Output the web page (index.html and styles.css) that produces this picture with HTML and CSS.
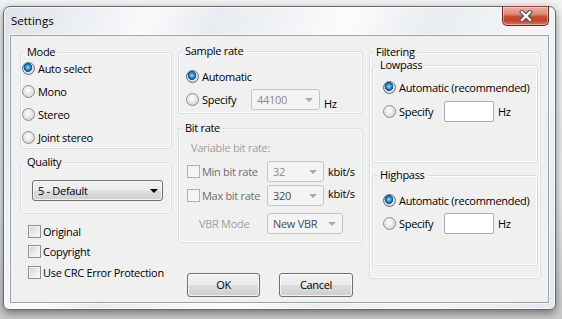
FILE: index.html
```html
<!DOCTYPE html>
<html lang="en">
<head>
    <meta charset="UTF-8">
    <title>Settings</title>
    <link rel="stylesheet" href="styles.css">
</head>
<body>
    <div class="window">
        <div class="titlebar">
            <span class="title">Settings</span>
            <div class="close">
                <svg width="14" height="12" viewBox="0 0 14 12">
                    <path d="M3 2 L11 10 M11 2 L3 10" stroke="#4a4f55" stroke-width="4.2" stroke-linecap="square" fill="none"/>
                    <path d="M3 2 L11 10 M11 2 L3 10" stroke="#ffffff" stroke-width="2.2" stroke-linecap="square" fill="none"/>
                </svg>
            </div>
        </div>

        <div class="client">
            <!-- left column -->
            <div class="col">
                <div class="group group-mode">
                    <div class="group-title">Mode</div>
                    <div class="mode-list">
                        <div class="row r23"><span class="radio checked"></span>Auto select</div>
                        <div class="row r23"><span class="radio"></span>Mono</div>
                        <div class="row r23"><span class="radio"></span>Stereo</div>
                        <div class="row r23"><span class="radio"></span>Joint stereo</div>
                    </div>
                </div>

                <div class="group group-quality">
                    <div class="group-title">Quality</div>
                    <div class="combo quality-combo">5 - Default<span class="arrow"></span></div>
                </div>

                <div class="check-list">
                    <div class="row r-check"><span class="box"></span>Original</div>
                    <div class="row r-check"><span class="box"></span>Copyright</div>
                    <div class="row r-check"><span class="box"></span>Use CRC Error Protection</div>
                </div>
            </div>

            <!-- middle column -->
            <div class="col">
                <div class="group group-sample">
                    <div class="group-title">Sample rate</div>
                    <div class="sample-list">
                        <div class="row r23"><span class="radio checked"></span>Automatic</div>
                        <div class="row r23">
                            <span class="radio"></span><span class="lbl w-specify">Specify</span>
                            <div class="combo disabled w-44100">44100<span class="arrow"></span></div>
                            <span class="unit low">Hz</span>
                        </div>
                    </div>
                </div>

                <div class="group group-bitrate">
                    <div class="group-title">Bit rate</div>
                    <div class="vbr-caption">Variable bit rate:</div>
                    <div class="row r24 bit-row">
                        <span class="box disabled"></span><span class="lbl w-bit dim">Min bit rate</span>
                        <div class="combo disabled w-bit-combo">32<span class="arrow"></span></div>
                        <span class="unit">kbit/s</span>
                    </div>
                    <div class="row r24 bit-row">
                        <span class="box disabled"></span><span class="lbl w-bit dim">Max bit rate</span>
                        <div class="combo disabled dark w-bit-combo">320<span class="arrow"></span></div>
                        <span class="unit high">kbit/s</span>
                    </div>
                    <div class="row r24 vbr-row">
                        <span class="lbl w-vbr faint">VBR Mode</span>
                        <div class="combo disabled dark w-vbr-combo">New VBR<span class="arrow"></span></div>
                    </div>
                </div>

                <div class="buttons">
                    <div class="btn btn-ok">OK</div>
                    <div class="btn btn-cancel">Cancel</div>
                </div>
            </div>

            <!-- right column -->
            <div class="col">
                <div class="group group-filter">
                    <div class="group-title">Filtering</div>

                    <div class="group group-low">
                        <div class="group-title">Lowpass</div>
                        <div class="pass-list first">
                            <div class="row r24"><span class="radio checked"></span>Automatic (recommended)</div>
                            <div class="row r24">
                                <span class="radio"></span><span class="lbl w-pass">Specify</span>
                                <div class="edit"></div>
                                <span class="unit">Hz</span>
                            </div>
                        </div>
                    </div>

                    <div class="group group-high">
                        <div class="group-title">Highpass</div>
                        <div class="pass-list">
                            <div class="row r24"><span class="radio checked"></span>Automatic (recommended)</div>
                            <div class="row r23">
                                <span class="radio"></span><span class="lbl w-pass">Specify</span>
                                <div class="edit"></div>
                                <span class="unit">Hz</span>
                            </div>
                        </div>
                    </div>
                </div>
            </div>
        </div>
    </div>
</body>
</html>
```

FILE: styles.css
```css
* {
    box-sizing: border-box;
}

body {
    margin: 0;
    width: 562px;
    height: 319px;
    overflow: hidden;
    background: linear-gradient(#f2f2f2 0, #e9e9e9 60%, #c9c9c9 100%);
    font-family: 'Open Sans', 'Liberation Sans', sans-serif;
    font-size: 11px;
    letter-spacing: -0.3px;
    color: #000;
    padding: 6px 0 0 3px;
}

/* window frame */
.window {
    width: 553px;
    height: 304px;
    border: 1px solid #5e6a76;
    border-radius: 7px 7px 6px 6px;
    background: linear-gradient(112deg, #dde2e8 0%, #eef1f5 14%, #f9fafb 22%, #e8ecf0 32%, #f4f6f8 46%, #fbfcfc 52%, #e9edf1 64%, #f3f5f7 80%, #e3e8ed 100%);
    box-shadow: inset 0 0 0 1px rgba(255,255,255,0.75), 0 3px 9px rgba(0,0,0,0.45);
    display: flex;
    flex-direction: column;
}

.titlebar {
    height: 28px;
    display: flex;
    align-items: flex-start;
    padding-left: 7px;
}

.title {
    font-size: 11.5px;
    letter-spacing: 0;
    line-height: 14px;
    margin-top: 7px;
    color: #000;
}

.close {
    margin-left: auto;
    margin-right: 6px;
    margin-top: -1px;
    width: 47px;
    height: 20px;
    border: 1px solid #6b2a20;
    border-top-color: #8a4a40;
    border-radius: 0 0 5px 5px;
    background: linear-gradient(#eab0a2 0%, #dd8a77 40%, #c8503a 52%, #c2432f 75%, #d9785d 100%);
    box-shadow: inset 0 0 0 1px rgba(255,220,210,0.5);
    display: flex;
    align-items: center;
    justify-content: center;
}

/* client area */
.client {
    flex: 1;
    margin: 0 6px 6px 6px;
    background: #f0f0f0;
    border: 1px solid #9aa3ad;
    box-shadow: 0 0 0 1px rgba(255,255,255,0.6);
    display: grid;
    grid-template-columns: 152px 185px 172px;
    column-gap: 6px;
    padding: 16px 7px 0 9px;
}

.col {
    display: flex;
    flex-direction: column;
}

/* group boxes */
.group {
    border: 1px solid #d5dfe5;
    border-radius: 3px;
    box-shadow: inset 0 0 0 1px #fbfcfd;
}

.group-title {
    width: fit-content;
    line-height: 13px;
    margin: -8px 0 0 4px;
    padding: 0 2px;
    background: #f0f0f0;
}

.row {
    display: flex;
    align-items: center;
    white-space: nowrap;
}

.r23 { height: 23px; }
.r24 { height: 24px; }
.r-check { height: 20.5px; }

.radio {
    width: 13px;
    height: 13px;
    flex: none;
    border-radius: 50%;
    border: 1px solid #8a8d90;
    background: radial-gradient(circle at 45% 40%, #ffffff 0, #eeeeee 35%, #d6d6d6 75%, #c4c4c4 100%);
    margin-right: 3px;
}

.radio.checked {
    border-color: #5b6f82;
    background:
        radial-gradient(circle at 45% 40%, #b6e6ff 0, #4aa6de 1.6px, #1d5e9a 3.6px, #1d4c7a 4.3px, rgba(0,0,0,0) 4.6px),
        radial-gradient(circle at 45% 40%, #ffffff 0, #eeeeee 35%, #d6d6d6 75%, #c4c4c4 100%);
}

.box {
    width: 13px;
    height: 13px;
    flex: none;
    border: 1px solid #8e8f8f;
    background: linear-gradient(135deg, #cfcfcf 0%, #eeeeee 60%, #fbfbfb 100%);
    box-shadow: inset 0 0 0 1px #f4f4f4;
    margin-right: 2px;
}

.box.disabled {
    border-color: #b1b1b1;
    background: #f4f4f4;
    box-shadow: none;
}

.lbl { display: inline-block; }
.dim { color: #6d6d6d; }
.faint { color: #a0a0a0; }

/* combo boxes */
.combo {
    position: relative;
    height: 21px;
    line-height: 19px;
    padding-left: 5px;
    border: 1px solid #707070;
    border-radius: 3px;
    background: linear-gradient(#f2f2f2 0%, #ebebeb 48%, #dddddd 52%, #cfcfcf 100%);
    box-shadow: inset 0 0 0 1px rgba(255,255,255,0.7);
}

.combo .arrow {
    position: absolute;
    right: 4px;
    top: 8px;
    border-left: 4px solid transparent;
    border-right: 4px solid transparent;
    border-top: 4px solid #000;
}

.combo.disabled {
    border-color: #c2c4c6;
    background: #f4f4f4;
    box-shadow: none;
    color: #8a8a8a;
}

.combo.disabled.dark { color: #4a4a4a; }

.combo.disabled .arrow {
    right: 6px;
    border-top-color: #a9a9a9;
}

.unit { margin-left: 4px; }
.unit.low { margin-top: 7px; }
.unit.high { margin-top: -3px; }

/* left column */
.group-mode { height: 97px; }
.mode-list { margin-top: -1px; padding-left: 1px; }

.group-quality {
    height: 52px;
    margin-top: 13px;
}

.quality-combo {
    width: 131px;
    margin: 12px 0 0 11px;
}

.check-list {
    margin-top: 7px;
    padding-left: 8px;
}

/* middle column */
.group-sample {
    height: 63px;
    margin-top: -1px;
}

.sample-list {
    margin-top: 8px;
    padding-left: 7px;
}

.w-specify { width: 49px; }
.w-44100 { width: 69px; }

.group-bitrate {
    height: 115px;
    margin-top: 14px;
}

.vbr-caption {
    color: #a0a0a0;
    line-height: 15px;
    margin: 6px 0 0 12px;
}

.bit-row { padding-left: 8px; }
.vbr-caption + .bit-row { margin-top: 4px; }

.w-bit { width: 65px; }
.w-bit-combo { width: 57px; }

.vbr-row {
    margin-top: 4px;
    padding-left: 20px;
}

.w-vbr { width: 68px; }
.w-vbr-combo { width: 76px; }

.buttons {
    display: flex;
    gap: 19px;
    margin: 30px 0 0 9px;
}

.btn {
    height: 24px;
    line-height: 22px;
    text-align: center;
    border: 1px solid #707070;
    border-radius: 3px;
    background: linear-gradient(#f2f2f2 0%, #ebebeb 48%, #dddddd 52%, #cfcfcf 100%);
    box-shadow: inset 0 0 0 1px rgba(255,255,255,0.7);
}

.btn-ok { width: 73px; }
.btn-cancel { width: 74px; }

/* right column */
.group-filter {
    height: 227px;
}

.group-low {
    height: 98px;
    margin: 7px 2px 0 2px;
}

.group-high {
    height: 91px;
    margin: 12px 2px 0 2px;
}

.group-low .group-title,
.group-high .group-title {
    margin-left: 5px;
}

.pass-list {
    padding-left: 10px;
    margin-top: 7px;
}

.pass-list.first { margin-top: 4px; }

.w-pass { width: 45px; }

.edit {
    width: 50px;
    height: 21px;
    background: #fff;
    border: 1px solid #abadb3;
    border-radius: 2px;
}
```
